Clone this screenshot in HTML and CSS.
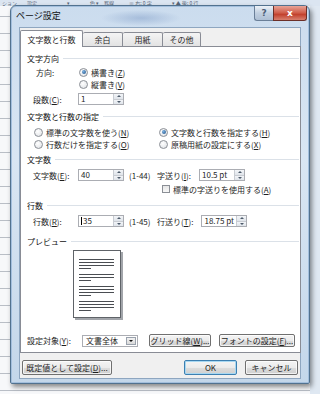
FILE: index.html
```html
<!DOCTYPE html>
<html>
<head>
  <meta charset="utf-8">
  <title>ページ設定</title>
  <link rel="stylesheet" href="styles.css">
</head>
<body>
  <div class="ribbon">ション　　設定　　　　　　▾　　　　色 ▾　罫線　　　≡ 右: 0 字　　　　▾ ▲ 後: 0 行</div>

  <div class="dialog">
    <div class="titlebar">
      <span class="title">ページ設定</span>
      <div class="caption-btns">
        <span class="cap-help">?</span>
        <span class="cap-close">x</span>
      </div>
    </div>

    <div class="client">
      <div class="tabs">
        <span class="tab active">文字数と行数</span>
        <span class="tab">余白</span>
        <span class="tab">用紙</span>
        <span class="tab">その他</span>
      </div>

      <div class="panel">
        <div class="group">文字方向</div>
        <div class="row mt2">
          <span class="lbl lbl-indent">方向:</span>
          <span class="radio on"></span><span>横書き(<u>Z</u>)</span>
        </div>
        <div class="row row-sub">
          <span class="radio"></span><span>縦書き(<u>V</u>)</span>
        </div>
        <div class="row mt3">
          <span class="lbl">段数(<u>C</u>):</span>
          <span class="spinbox"><span class="val">1</span><span class="spin"><i class="up"></i><i class="down"></i></span></span>
        </div>

        <div class="group mt5">文字数と行数の指定</div>
        <div class="row mt4 row-radios">
          <span class="col"><span class="radio"></span><span>標準の文字数を使う(<u>N</u>)</span></span>
          <span class="col"><span class="radio on"></span><span>文字数と行数を指定する(<u>H</u>)</span></span>
        </div>
        <div class="row row-radios">
          <span class="col"><span class="radio"></span><span>行数だけを指定する(<u>O</u>)</span></span>
          <span class="col"><span class="radio"></span><span>原稿用紙の設定にする(<u>X</u>)</span></span>
        </div>

        <div class="group mt3">文字数</div>
        <div class="row mt4">
          <span class="lbl">文字数(<u>E</u>):</span>
          <span class="spinbox"><span class="val">40</span><span class="spin"><i class="up"></i><i class="down"></i></span></span>
          <span class="range">(1-44)</span>
          <span class="lbl2">字送り(<u>I</u>):</span>
          <span class="spinbox"><span class="val">10.5 pt</span><span class="spin"><i class="up"></i><i class="down"></i></span></span>
        </div>
        <div class="row mt2 row-check">
          <span class="check"></span><span>標準の字送りを使用する(<u>A</u>)</span>
        </div>

        <div class="group mt4">行数</div>
        <div class="row mt4">
          <span class="lbl">行数(<u>R</u>):</span>
          <span class="spinbox"><span class="val"><b class="caret"></b>35</span><span class="spin"><i class="up"></i><i class="down"></i></span></span>
          <span class="range">(1-45)</span>
          <span class="lbl2">行送り(<u>T</u>):</span>
          <span class="spinbox"><span class="val">18.75 pt</span><span class="spin"><i class="up"></i><i class="down"></i></span></span>
        </div>

        <div class="group mt8">プレビュー</div>
        <div class="page">
          <div class="para"><i></i><i></i><i></i><i class="short"></i></div>
          <div class="para"><i></i><i></i><i class="short"></i></div>
          <div class="para gap"><i></i><i></i><i></i><i class="short"></i></div>
          <div class="para"><i></i><i></i><i></i><i class="short"></i></div>
        </div>

        <div class="row apply">
          <span class="lbl3">設定対象(<u>Y</u>):</span>
          <span class="select"><span class="val">文書全体</span><span class="drop"><i></i></span></span>
          <span class="btn btn-grid">グリッド線(<u>W</u>)...</span>
          <span class="btn btn-font">フォントの設定(<u>F</u>)...</span>
        </div>
      </div>

      <div class="footer">
        <span class="btn btn-default">既定値として設定(<u>D</u>)...</span>
        <div class="footer-right">
          <span class="btn btn-ok">OK</span>
          <span class="btn btn-cancel">キャンセル</span>
        </div>
      </div>
    </div>
  </div>
</body>
</html>
```

FILE: styles.css
```css
* {
  box-sizing: border-box;
}
body {
  margin: 0;
  width: 320px;
  height: 394px;
  overflow: hidden;
  position: relative;
  font-family: "Noto Sans CJK JP", "Liberation Sans", sans-serif;
  font-size: 8px;
  color: #1e1e1e;
  background:
    linear-gradient(to right, transparent 310px, #dfe8f2 310px),
    repeating-linear-gradient(to bottom, transparent 0, transparent 16px, #b9bec6 16px, #b9bec6 17px),
    #f7f8fa;
}
u {
  text-decoration: underline;
  text-underline-offset: 1px;
}

/* word ribbon behind the dialog */
.ribbon {
  height: 6px;
  overflow: hidden;
  background: #dbe5f1;
  color: #5a6576;
  font-size: 5px;
  line-height: 6px;
  white-space: nowrap;
  padding-left: 2px;
}

/* dialog window */
.dialog {
  position: absolute;
  left: 10px;
  top: 5px;
  width: 300px;
  height: 379px;
  padding: 0 8px 4px 8px;
  display: flex;
  flex-direction: column;
  border: 1px solid #52728f;
  border-radius: 6px 6px 2px 2px;
  background:
    radial-gradient(ellipse 40px 8px at 130px 12px, rgba(120,150,195,0.45), transparent),
    linear-gradient(to bottom, #cbdcee 0%, #d9e6f3 40%, #c4d7ea 100%);
  box-shadow: inset 0 0 0 1px #a3bfdd, 2px 3px 5px rgba(0,0,0,0.45);
}
.titlebar {
  height: 21px;
  display: flex;
  justify-content: space-between;
  align-items: flex-start;
  margin-right: -6px;
}
.title {
  margin-top: 4px;
  margin-left: -3px;
  font-size: 9px;
  line-height: 12px;
  color: #111;
}
.caption-btns {
  display: flex;
}
.cap-help, .cap-close {
  height: 15px;
  display: flex;
  align-items: center;
  justify-content: center;
  font-family: "DejaVu Sans", sans-serif;
  font-weight: bold;
}
.cap-help {
  width: 19px;
  border: 1px solid #6a7f98;
  border-top: none;
  border-right: none;
  border-radius: 0 0 0 3px;
  background: linear-gradient(to bottom, #edf2f8, #c0cfe0 50%, #aebfd4);
  color: #4b5d75;
  font-size: 9px;
}
.cap-close {
  width: 34px;
  border: 1px solid #6b2f28;
  border-top: none;
  border-radius: 0 0 3px 0;
  background: linear-gradient(to bottom, #e8a497, #cf5b48 50%, #c2412d 60%, #d8806f);
  color: #fff;
  font-size: 9px;
}

.client {
  flex: 1;
  background: #f0f0f0;
  border: 1px solid #8ea6c0;
  padding: 1px 1px 0 0;
  display: flex;
  flex-direction: column;
}

/* tabs */
.tabs {
  height: 17px;
  display: flex;
  align-items: flex-end;
  position: relative;
  z-index: 1;
}
.tab {
  height: 14px;
  padding: 0;
  display: flex;
  align-items: center;
  justify-content: center;
  white-space: nowrap;
  border: 1px solid #898c95;
  border-bottom: none;
  border-left: none;
  background: linear-gradient(to bottom, #f4f4f4, #e3e3e3);
  border-radius: 2px 2px 0 0;
}
.tab:nth-child(2) { width: 40px; }
.tab:nth-child(3) { width: 40px; }
.tab:nth-child(4) { width: 38px; }
.tab.active {
  width: 63px;
  height: 17px;
  margin-bottom: -1px;
  background: #fff;
  border-left: 1px solid #898c95;
}

/* tab page */
.panel {
  width: 281px;
  height: 307px;
  background: #fff;
  border: 1px solid #898c95;
  padding: 5px 1px 0 6px;
  display: flex;
  flex-direction: column;
}
.group {
  height: 12px;
  display: flex;
  align-items: center;
  gap: 4px;
  color: #111;
}
.group::after {
  content: "";
  flex: 1;
  height: 1px;
  background: #dbe1e8;
}
.row {
  height: 12px;
  display: flex;
  align-items: center;
  padding-left: 6px;
  white-space: nowrap;
}
.mt2 { margin-top: 2px; }
.mt3 { margin-top: 3px; }
.mt4 { margin-top: 4px; }
.mt5 { margin-top: 5px; }
.mt8 { margin-top: 8px; }

.lbl {
  width: 45px;
}
.lbl-indent {
  width: 46px;
  padding-left: 3px;
}
.row-sub {
  padding-left: 52px;
}
.lbl2 {
  margin-right: 8px;
}
.range {
  width: 33px;
  padding-left: 5px;
}

.radio {
  width: 9px;
  height: 9px;
  border-radius: 50%;
  border: 1px solid #8b8f96;
  background: radial-gradient(circle at 40% 35%, #ffffff, #dcdfe3);
  margin-right: 3px;
  display: flex;
  align-items: center;
  justify-content: center;
}
.radio.on::after {
  content: "";
  width: 4px;
  height: 4px;
  border-radius: 50%;
  background: radial-gradient(circle at 35% 35%, #7ab0e0, #1d4f86);
}
.row-radios {
  padding-left: 7px;
}
.row-radios .col {
  width: 125px;
  display: flex;
  align-items: center;
}
.row-check {
  padding-left: 135px;
}
.check {
  width: 8px;
  height: 8px;
  border: 1px solid #8b8f96;
  background: linear-gradient(to bottom, #e6e6e6, #f8f8f8);
  margin-right: 3px;
}

/* spin edit */
.spinbox {
  width: 46px;
  height: 12px;
  display: flex;
  border: 1px solid #abadb3;
  background: #fff;
}
.spinbox .val {
  flex: 1;
  padding-left: 2px;
  line-height: 10px;
  display: flex;
  align-items: center;
}
.caret {
  width: 1px;
  height: 8px;
  background: #000;
  margin-right: 1px;
}
.spin {
  width: 10px;
  display: flex;
  flex-direction: column;
  border-left: 1px solid #c8ccd2;
}
.spin i {
  flex: 1;
  display: flex;
  align-items: center;
  justify-content: center;
  background: linear-gradient(to bottom, #f3f5f8, #dfe4ea);
}
.spin i.up { border-bottom: 1px solid #c8ccd2; }
.spin i::after {
  content: "";
  border-left: 2px solid transparent;
  border-right: 2px solid transparent;
}
.spin i.up::after { border-bottom: 2px solid #4d5a6a; }
.spin i.down::after { border-top: 2px solid #4d5a6a; }

/* preview */
.page {
  margin: 3px 0 0 46px;
  width: 48px;
  height: 68px;
  border: 1px solid #5f6368;
  box-shadow: 2px 2px 0 #a2a5aa;
  padding: 8px 0 0 5px;
}
.para {
  display: flex;
  flex-direction: column;
  gap: 2px;
  margin-bottom: 5px;
}
.para.gap {
  margin-top: 2px;
}
.para i {
  height: 1px;
  width: 35px;
  background: #4a4d52;
}
.para i.short {
  width: 12px;
}

/* apply row */
.apply {
  margin-top: 16px;
  height: 13px;
  padding-left: 0;
}
.lbl3 {
  width: 55px;
}
.select {
  width: 56px;
  height: 12px;
  display: flex;
  border: 1px solid #abadb3;
  background: #fff;
}
.select .val {
  flex: 1;
  padding-left: 3px;
  line-height: 10px;
}
.select .drop {
  width: 10px;
  margin: 1px;
  border: 1px solid #9aa2ad;
  background: linear-gradient(to bottom, #f2f2f2, #d9d9d9);
  display: flex;
  align-items: center;
  justify-content: center;
}
.select .drop i {
  border-left: 2px solid transparent;
  border-right: 2px solid transparent;
  border-top: 2px solid #111;
}

.btn {
  height: 13px;
  display: flex;
  align-items: center;
  justify-content: center;
  border: 1px solid #707070;
  border-radius: 2px;
  background: linear-gradient(to bottom, #f4f4f4 0%, #ebebeb 50%, #dddddd 51%, #cfcfcf 100%);
  box-shadow: inset 0 0 0 1px rgba(255,255,255,0.7);
  white-space: nowrap;
}
.btn-grid {
  width: 62px;
  margin-left: 11px;
}
.btn-font {
  width: 76px;
  margin-left: 8px;
}

.footer {
  flex: 1;
  display: flex;
  justify-content: space-between;
  align-items: flex-start;
  padding: 7px 1px 0 2px;
}
.footer .btn {
  height: 15px;
}
.btn-default {
  width: 90px;
}
.footer-right {
  display: flex;
  gap: 8px;
}
.btn-ok {
  width: 53px;
  border-color: #3c7fb1;
  box-shadow: inset 0 0 0 1px #a8d8f2;
}
.btn-cancel {
  width: 53px;
}
```
